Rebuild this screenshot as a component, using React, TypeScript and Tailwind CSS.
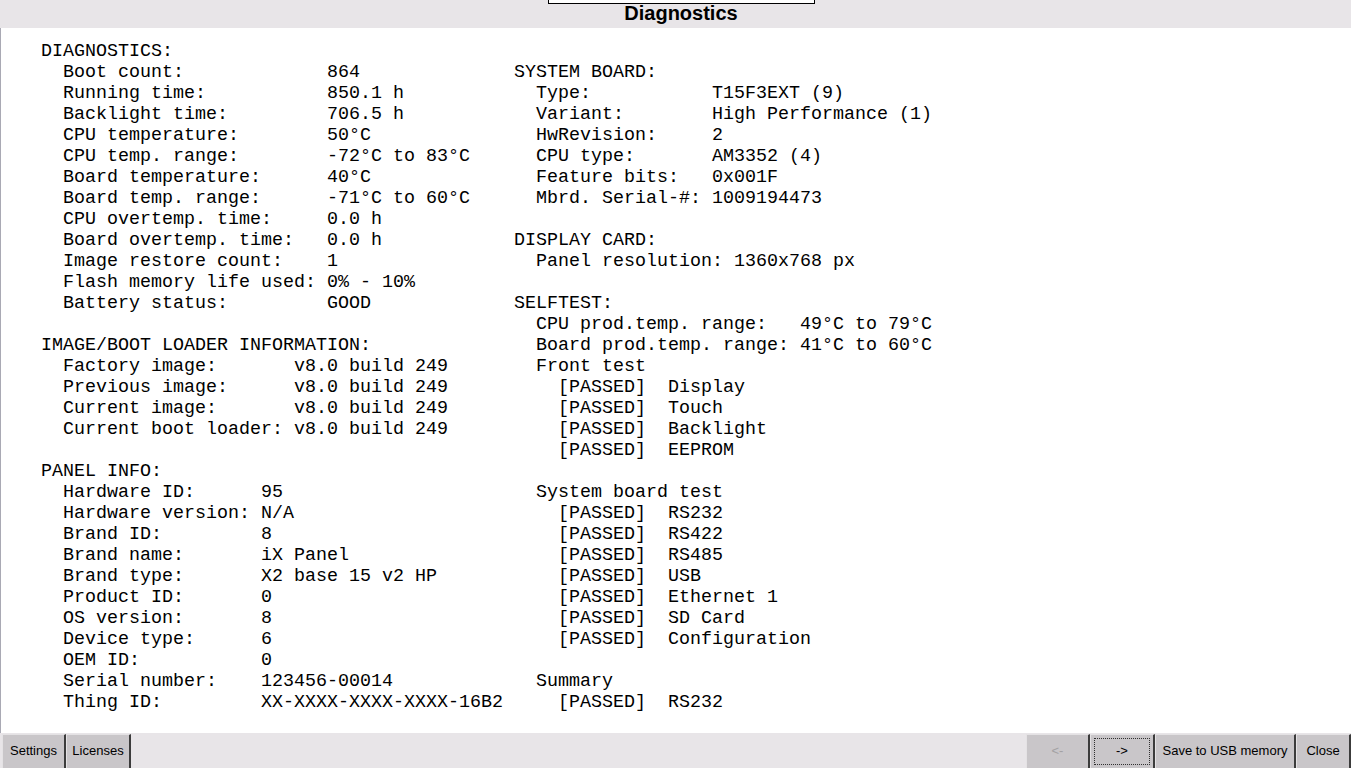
import { FC } from "react";

const leftLines = [
  "DIAGNOSTICS:",
  "  Boot count:             864",
  "  Running time:           850.1 h",
  "  Backlight time:         706.5 h",
  "  CPU temperature:        50°C",
  "  CPU temp. range:        -72°C to 83°C",
  "  Board temperature:      40°C",
  "  Board temp. range:      -71°C to 60°C",
  "  CPU overtemp. time:     0.0 h",
  "  Board overtemp. time:   0.0 h",
  "  Image restore count:    1",
  "  Flash memory life used: 0% - 10%",
  "  Battery status:         GOOD",
  "",
  "IMAGE/BOOT LOADER INFORMATION:",
  "  Factory image:       v8.0 build 249",
  "  Previous image:      v8.0 build 249",
  "  Current image:       v8.0 build 249",
  "  Current boot loader: v8.0 build 249",
  "",
  "PANEL INFO:",
  "  Hardware ID:      95",
  "  Hardware version: N/A",
  "  Brand ID:         8",
  "  Brand name:       iX Panel",
  "  Brand type:       X2 base 15 v2 HP",
  "  Product ID:       0",
  "  OS version:       8",
  "  Device type:      6",
  "  OEM ID:           0",
  "  Serial number:    123456-00014",
  "  Thing ID:         XX-XXXX-XXXX-XXXX-16B2",
];

const rightLines = [
  "",
  "SYSTEM BOARD:",
  "  Type:           T15F3EXT (9)",
  "  Variant:        High Performance (1)",
  "  HwRevision:     2",
  "  CPU type:       AM3352 (4)",
  "  Feature bits:   0x001F",
  "  Mbrd. Serial-#: 1009194473",
  "",
  "DISPLAY CARD:",
  "  Panel resolution: 1360x768 px",
  "",
  "SELFTEST:",
  "  CPU prod.temp. range:   49°C to 79°C",
  "  Board prod.temp. range: 41°C to 60°C",
  "  Front test",
  "    [PASSED]  Display",
  "    [PASSED]  Touch",
  "    [PASSED]  Backlight",
  "    [PASSED]  EEPROM",
  "",
  "  System board test",
  "    [PASSED]  RS232",
  "    [PASSED]  RS422",
  "    [PASSED]  RS485",
  "    [PASSED]  USB",
  "    [PASSED]  Ethernet 1",
  "    [PASSED]  SD Card",
  "    [PASSED]  Configuration",
  "",
  "  Summary",
  "    [PASSED]  RS232",
];

const mono = "font-['Liberation_Mono','Courier_New',monospace] text-[18.33px] leading-[21px] text-black whitespace-pre";

const Column: FC<{ lines: string[]; className?: string }> = ({ lines, className }) => (
  <div className={`${mono} ${className ?? ""}`}>
    {lines.map((line, i) => (
      <div key={i} className="h-[21px]">{line}</div>
    ))}
  </div>
);

interface BtnProps {
  label: string;
  width: string;
  disabled?: boolean;
  focused?: boolean;
}

const Btn: FC<BtnProps> = ({ label, width, disabled, focused }) => (
  <button
    className={`${width} h-full bg-[#c9c6c9] border-l border-t border-l-[#e4e2e4] border-t-[#e4e2e4] border-r-2 border-r-[#3c3c3c] flex items-center justify-center p-[3px] text-[13px] font-['Liberation_Sans',Arial,sans-serif] ${
      disabled ? "text-[#a3a1a3]" : "text-black"
    }`}
  >
    <span
      className={`w-full h-full flex items-center justify-center pb-[2px] ${
        focused ? "border border-dotted border-[#303030]" : "border border-transparent"
      }`}
    >
      {label}
    </span>
  </button>
);

export default function App() {
  return (
    <div className="w-[1351px] h-[768px] flex flex-col bg-white overflow-hidden">
      <div className="h-[28px] bg-[#e8e5e8] flex flex-col items-center shrink-0 pl-[11px]">
        <div className="w-[267px] h-[4px] bg-white border-x border-b border-black" />
        <div className="font-['Liberation_Sans',Arial,sans-serif] font-bold text-[20px] leading-[18px] text-black">
          Diagnostics
        </div>
      </div>

      <div className="flex-1 flex border-l border-l-[#a9a9b4]">
        <div className="flex pl-[40px] pt-[13px]">
          <Column lines={leftLines} className="w-[473px]" />
          <Column lines={rightLines} />
        </div>
      </div>

      <div className="h-[35px] bg-[#e8e5e8] flex justify-between shrink-0 pt-[1px]">
        <div className="flex h-full pl-[2px]">
          <Btn label="Settings" width="w-[64px]" />
          <Btn label="Licenses" width="w-[65px]" />
        </div>
        <div className="flex h-full">
          <Btn label="<-" width="w-[64px]" disabled />
          <Btn label="->" width="w-[65px]" focused />
          <Btn label="Save to USB memory" width="w-[141px]" />
          <Btn label="Close" width="w-[55px]" />
        </div>
      </div>
    </div>
  );
}
